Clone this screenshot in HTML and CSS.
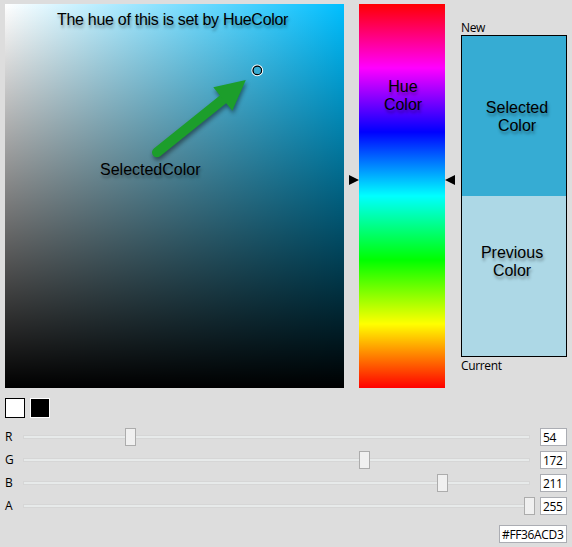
FILE: index.html
```html
<!DOCTYPE html>
<html lang="en">
<head>
<meta charset="utf-8">
<title>Color Picker</title>
<link rel="stylesheet" href="styles.css">
</head>
<body>
<main class="picker">
  <section class="top">
    <div class="field">
      <span class="note note-hue">The hue of this is set by HueColor</span>
      <span class="note note-selected">SelectedColor</span>
      <svg class="overlay" width="339" height="384" viewBox="5 4 339 384">
        <g class="arrow">
          <path d="M157 152.3L223 99.3" stroke="#1c9e2b" stroke-width="10" stroke-linecap="round"/>
          <path d="M245.8 80L213.3 87.2L232.3 110.8Z" fill="#1c9e2b"/>
        </g>
        <circle cx="257.3" cy="70.4" r="5.3" fill="none" stroke="#fff" stroke-width="1.2"/>
        <circle cx="257.3" cy="70.4" r="4.3" fill="none" stroke="#000" stroke-width="1.2"/>
      </svg>
    </div>
    <div class="hue">
      <svg class="marker" width="10" height="10"><path d="M0 0L10 5L0 10Z"/></svg>
      <div class="spectrum"><span class="note note-block">Hue<br>Color</span></div>
      <svg class="marker" width="10" height="10"><path d="M10 0L0 5L10 10Z"/></svg>
    </div>
    <div class="compare">
      <div class="caption">New</div>
      <div class="preview">
        <div class="new"><span class="note note-block">Selected<br>Color</span></div>
        <div class="current"><span class="note note-block">Previous<br>Color</span></div>
      </div>
      <div class="caption caption-current">Current</div>
    </div>
  </section>
  <div class="swatches"><i class="swatch white"></i><i class="swatch black"></i></div>
  <section class="channels">
    <div class="channel"><label>R</label><div class="track"><i class="thumb" style="left:102px"></i></div><div class="box">54</div></div>
    <div class="channel"><label>G</label><div class="track"><i class="thumb" style="left:336px"></i></div><div class="box">172</div></div>
    <div class="channel"><label>B</label><div class="track"><i class="thumb" style="left:414px"></i></div><div class="box">211</div></div>
    <div class="channel"><label>A</label><div class="track"><i class="thumb" style="left:501px"></i></div><div class="box">255</div></div>
  </section>
  <div class="box hex">#FF36ACD3</div>
</main>
</body>
</html>
```
FILE: styles.css
```css
* { box-sizing: border-box; }
body {
  margin: 0;
  background: #ddd;
  color: #000;
  font: 12px/16px "Open Sans", "Noto Sans", sans-serif;
  letter-spacing: -.35px;
}
.picker {
  display: flex;
  flex-direction: column;
  width: 572px;
  height: 547px;
  padding: 4px 5px;
  overflow: hidden;
}
.top { display: flex; height: 384px; }
.field {
  position: relative;
  width: 339px;
  height: 384px;
  background: linear-gradient(to bottom, transparent, #000), linear-gradient(to right, #fff, #00bfff);
}
.overlay { position: absolute; inset: 0; }
.arrow { fill: none; filter: drop-shadow(1px 3px 2px rgba(0, 0, 0, .45)); }
.note {
  font: 16px/18px "Liberation Sans", Arial, sans-serif;
  letter-spacing: 0;
  white-space: nowrap;
  text-shadow: 1px 3px 3px rgba(0, 0, 0, .35);
}
.note-hue { position: absolute; left: 52px; top: 7px; letter-spacing: -.29px; }
.note-selected { position: absolute; left: 95px; top: 157px; }
.note-block { text-align: center; }
.hue { display: flex; margin-left: 5px; }
.marker { margin-top: 171px; }
.spectrum {
  width: 86px;
  padding-top: 74px;
  padding-left: 2px;
  display: flex;
  justify-content: center;
  background: linear-gradient(#f00, #f0f, #00f, #0ff, #0f0, #ff0, #f00);
}
.compare { width: 106px; margin-left: 6px; }
.caption { height: 31px; padding-top: 16px; line-height: 16px; }
.caption-current { padding-top: 1px; }
.preview { height: 322px; border: 1px solid #000; }
.new, .current { display: flex; justify-content: center; height: 160px; }
.new { background: #36acd3; padding: 63px 0 0 6px; }
.current { background: #add8e6; padding: 48px 4px 0 0; }
.swatches { display: flex; gap: 5px; margin-top: 10px; }
.swatch { width: 20px; height: 20px; border: 1px solid #000; }
.white { background: #fff; }
.black { background: #000; border-color: #fff; }
.channels { display: flex; flex-direction: column; gap: 5px; margin-top: 10px; }
.channel { display: flex; align-items: center; height: 18px; }
.channel label { width: 18px; }
.track {
  position: relative;
  width: 507px;
  height: 4px;
  border: 1px solid #d6d6d6;
  background: #e7eaea;
}
.thumb {
  position: absolute;
  top: -8px;
  margin-left: -1px;
  width: 11px;
  height: 18px;
  border: 1px solid #acacac;
  background: #f0f0f0;
}
.box {
  width: 27px;
  height: 18px;
  padding-left: 2px;
  border: 1px solid #abadb3;
  background: #fff;
  line-height: 17px;
  white-space: nowrap;
}
.channel .box { margin-left: 10px; }
.hex { width: 68px; margin: 10px 0 0 494px; }
```
